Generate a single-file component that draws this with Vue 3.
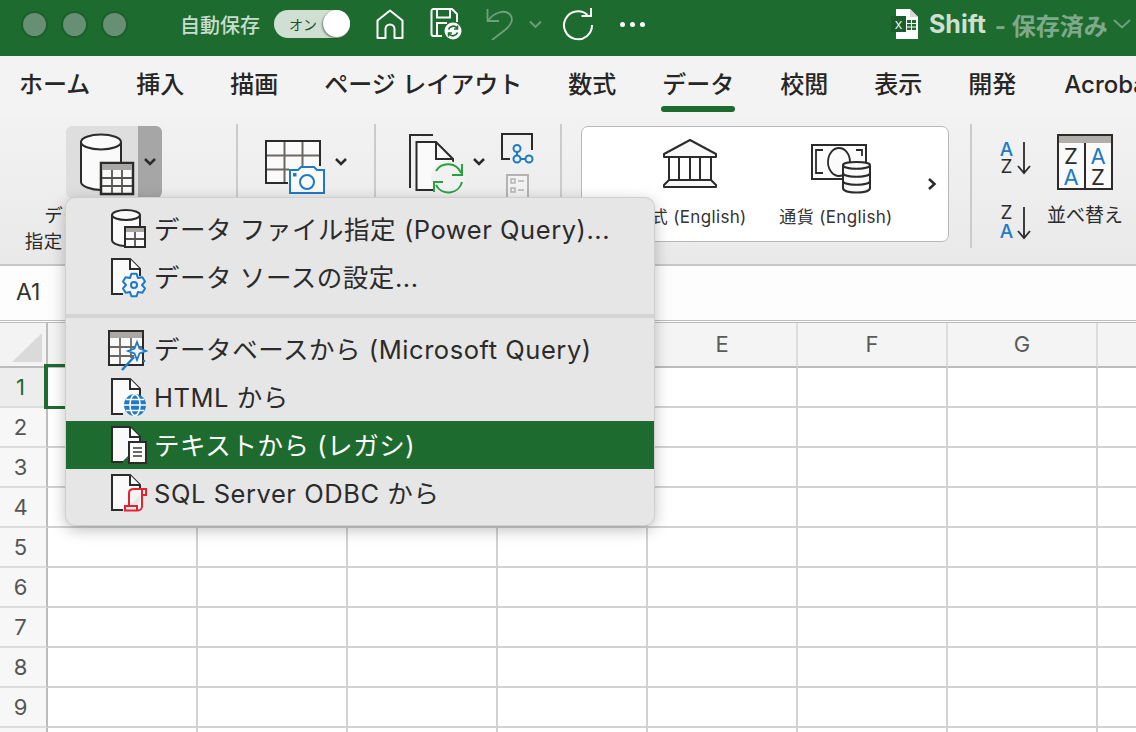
<script setup>
const tabs = [
  { t: 'ホーム' }, { t: '挿入' }, { t: '描画' },
  { t: 'ページ レイアウト' }, { t: '数式' },
  { t: 'データ', active: true }, { t: '校閲' }, { t: '表示' },
  { t: '開発' }, { t: 'Acrobat' }
]
const cols = ['A', 'B', 'C', 'D', 'E', 'F', 'G', 'H']
const rows = [1, 2, 3, 4, 5, 6, 7, 8, 9, 10]
function gear(cx, cy, R, r) {
  const p = []
  for (let i = 0; i < 6; i++) {
    const a = (i * 60 - 90) * Math.PI / 180
    const d = 13 * Math.PI / 180
    const m = 30 * Math.PI / 180
    p.push([cx + R * Math.cos(a - d), cy + R * Math.sin(a - d)])
    p.push([cx + R * Math.cos(a + d), cy + R * Math.sin(a + d)])
    p.push([cx + r * Math.cos(a + m), cy + r * Math.sin(a + m)])
  }
  return p.map(q => q[0].toFixed(1) + ',' + q[1].toFixed(1)).join(' ')
}
const gearPts = gear(26, 32, 11.5, 8)
const docPath = 'M15 36H4V1H22L32 11V18'
</script>

<template>
  <div class="app">
    <header class="titlebar">
      <div class="lights"><i></i><i></i><i></i></div>
      <span class="autosave">自動保存</span>
      <div class="toggle"><span>オン</span><b></b></div>
      <svg class="ic-home" width="28" height="30" viewBox="0 0 28 30"><path d="M1.500 29V11.500L14 1.500L26.500 11.500V29H18.500V20a4.500 4.500 0 0 0-9 0V29Z" fill="none" stroke="#fff" stroke-width="2" stroke-linejoin="round"/></svg>
      <svg class="ic-save" width="32" height="32" viewBox="0 0 32 32">
        <path d="M12 28H3.500a2 2 0 0 1-2-2V3a2 2 0 0 1 2-2H22L27 6V14" fill="none" stroke="#fff" stroke-width="2"/>
        <path d="M7 1.500V9.500H20V1.500M7 27V15H17" fill="none" stroke="#fff" stroke-width="2"/>
        <circle cx="23" cy="23" r="8.500" fill="#fff"/>
        <path d="M18.500 21.500a5 5 0 0 1 8.500-1.500M27.500 24.500a5 5 0 0 1-8.500 1.500" fill="none" stroke="#1e6b30" stroke-width="1.800"/>
        <path d="M27.500 17.500V21H24M18.500 28.500V25H22" fill="none" stroke="#1e6b30" stroke-width="1.500"/>
      </svg>
      <svg class="ic-undo" width="28" height="32" viewBox="0 0 28 32"><path d="M1.500 1V13H13M2.500 12C8 5 18 1 23.500 6C28.500 11 25 17 19 22L6 32" fill="none" stroke="#6f9f7c" stroke-width="1.800"/></svg>
      <svg class="ic-chev" width="13" height="9" viewBox="0 0 13 9"><path d="M1 1.500L6.500 7L12 1.500" fill="none" stroke="#6f9f7c" stroke-width="1.800"/></svg>
      <svg class="ic-redo" width="32" height="34" viewBox="0 0 32 34"><path d="M25.500 8A14 14 0 1 0 30 18" fill="none" stroke="#fff" stroke-width="2"/><path d="M29 1V9H19.500" fill="none" stroke="#fff" stroke-width="2"/></svg>
      <div class="dots"><i></i><i></i><i></i></div>
      <svg class="ic-xl" width="28" height="30" viewBox="0 0 28 30">
        <path d="M5 0H19L27 8V30H5Z" fill="#fff"/><path d="M19 0V8H27" fill="#d8d8d8"/>
        <rect x="16" y="11" width="9" height="10" fill="#1e6b30"/>
        <path d="M16 14.500H25M16 18H25M20.500 11V21" stroke="#fff" stroke-width="1"/>
        <rect x="0" y="7" width="15" height="16" fill="#1a5c2a"/>
        <text x="7.500" y="19.500" text-anchor="middle" class="xl-x">X</text>
      </svg>
      <span class="doc-name">Shift</span>
      <span class="doc-state">- 保存済み</span>
      <svg class="ic-chev2" width="18" height="10" viewBox="0 0 18 10"><path d="M1 1L9 8.500L17 1" fill="none" stroke="#6f9f7c" stroke-width="2"/></svg>
    </header>

    <nav class="tabs">
      <div v-for="tab in tabs" :key="tab.t" class="tab" :class="{ on: tab.active }">{{ tab.t }}</div>
    </nav>

    <section class="ribbon">
      <div class="g1">
        <div class="split">
          <div class="split-main">
            <svg width="72" height="72" viewBox="0 0 72 72">
              <path d="M15 16V56C15 60 25 64 35 64H55V16Z" fill="#fafafa"/>
              <path d="M15 16V56C15 60 25 64 35 64M55 16V36" fill="none" stroke="#2b2b2b" stroke-width="2"/>
              <ellipse cx="35" cy="16" rx="20" ry="7.500" fill="#fafafa" stroke="#2b2b2b" stroke-width="2"/>
              <rect x="35" y="37" width="32" height="31" fill="#fafafa" stroke="#2b2b2b" stroke-width="2.500"/>
              <rect x="36" y="38" width="30" height="6" fill="#a9a8a4"/>
              <path d="M46 44V67M56 44V67M36 52H66M36 60H66" stroke="#55544f" stroke-width="1.800"/>
            </svg>
          </div>
          <div class="split-arrow">
            <svg width="14" height="10" viewBox="0 0 14 10"><path d="M2 2L7 7L12 2" fill="none" stroke="#2b2b2b" stroke-width="2.500"/></svg>
          </div>
        </div>
        <div class="g1-label">データ ファイル<br>指定 (Power Query)</div>
      </div>
      <i class="sep"></i>
      <div class="g2">
        <svg width="90" height="72" viewBox="0 0 90 72">
          <path d="M23 57H1V15H55V40" fill="#fafafa" stroke="#2b2b2b" stroke-width="2"/>
          <path d="M19.500 16V56M37.500 16V40M2 29.500H54M2 43.500H24" stroke="#6a6964" stroke-width="2" fill="none"/>
          <path d="M25 67V44H33L36 41H49L52 44H59V67Z" fill="#fafafa" stroke="#1f7ac6" stroke-width="2"/>
          <circle cx="42" cy="56" r="7" fill="none" stroke="#1f7ac6" stroke-width="2"/>
          <rect x="28" y="47" width="3.500" height="3.500" fill="#1f7ac6"/>
          <path d="M71 33L76 38L81 33" fill="none" stroke="#2b2b2b" stroke-width="2.500"/>
        </svg>
      </div>
      <i class="sep"></i>
      <div class="g3">
        <svg width="135" height="72" viewBox="0 0 135 72">
          <path d="M5 62V9H28" fill="none" stroke="#2b2b2b" stroke-width="2"/>
          <path d="M28 64H11.500V16H31L48 33V40" fill="#fafafa" stroke="#2b2b2b" stroke-width="2"/>
          <path d="M31 16V33H48" fill="none" stroke="#2b2b2b" stroke-width="2"/>
          <circle cx="43" cy="52" r="17" fill="#f1f1f1"/>
          <path d="M31 45A14 14 0 0 1 56 47M57 56A14 14 0 0 1 31 59" fill="none" stroke="#2aa040" stroke-width="2"/>
          <path d="M57 38V49H47M29 66V56H38" fill="none" stroke="#2aa040" stroke-width="2"/>
          <path d="M69 33L74 38L79 33" fill="none" stroke="#2b2b2b" stroke-width="2.500"/>
          <path d="M105 33H97V8H127V24" fill="none" stroke="#2b2b2b" stroke-width="2"/>
          <path d="M112 25V33H120" fill="none" stroke="#1f7ac6" stroke-width="2"/>
          <circle cx="112" cy="22.500" r="3.500" fill="#f2f2f2" stroke="#1f7ac6" stroke-width="2"/>
          <circle cx="112" cy="33" r="3.500" fill="#f2f2f2" stroke="#1f7ac6" stroke-width="2"/>
          <circle cx="124" cy="33" r="3.500" fill="#f2f2f2" stroke="#1f7ac6" stroke-width="2"/>
          <rect x="102" y="49" width="21" height="23" fill="#f2f2f2" stroke="#b4b4b4" stroke-width="2"/>
          <path d="M106 53H110V57H106ZM106 62H110V66H106ZM113 55H119M113 64H119" fill="none" stroke="#b4b4b4" stroke-width="1.500"/>
        </svg>
      </div>
      <i class="sep"></i>
      <div class="g4">
        <div class="card">
          <div class="dtype">
            <svg width="56" height="50" viewBox="0 0 56 50">
              <path d="M2 16L28 2L54 16V19H2Z" fill="#f8f8f8" stroke="#2b2b2b" stroke-width="2" stroke-linejoin="round"/>
              <path d="M7 19V42M17 19V42M28 19V42M38 19V42M49 19V42" stroke="#2b2b2b" stroke-width="2"/>
              <path d="M7 42H49L54 47V49H2V47Z" fill="#f8f8f8" stroke="#2b2b2b" stroke-width="2" stroke-linejoin="round"/>
            </svg>
            <span>株式 (English)</span>
          </div>
          <div class="dtype second">
            <svg width="62" height="50" viewBox="0 0 62 50">
              <path d="M40 35H2V1H56V20" fill="#fbfbfb" stroke="#2b2b2b" stroke-width="2"/>
              <path d="M13 6H6V29H13M46 6H52V12" fill="none" stroke="#2b2b2b" stroke-width="1.800"/>
              <ellipse cx="29" cy="18" rx="11" ry="14" fill="none" stroke="#2b2b2b" stroke-width="1.800"/>
              <path d="M33 21C33 17 60 17 60 21V44C60 50 33 50 33 44Z" fill="#fbfbfb" stroke="#2b2b2b" stroke-width="2"/>
              <path d="M33 21C33 26 60 26 60 21M33 29C33 34 60 34 60 29M33 37C33 42 60 42 60 37" fill="none" stroke="#2b2b2b" stroke-width="2"/>
            </svg>
            <span>通貨 (English)</span>
          </div>
          <svg class="card-next" width="10" height="14" viewBox="0 0 10 14"><path d="M2 2L7.500 7L2 12" fill="none" stroke="#2b2b2b" stroke-width="2.500"/></svg>
        </div>
      </div>
      <i class="sep"></i>
      <div class="g5">
        <svg width="36" height="116" viewBox="0 0 36 116">
          <text x="7.500" y="32" text-anchor="middle" class="sort-a">A</text>
          <text x="7.500" y="49" text-anchor="middle" class="sort-z">Z</text>
          <path d="M25 18V48M19 42L25 49L31 42" fill="none" stroke="#2b2b2b" stroke-width="1.800"/>
          <text x="7.500" y="95" text-anchor="middle" class="sort-z">Z</text>
          <text x="7.500" y="114" text-anchor="middle" class="sort-a">A</text>
          <path d="M25 83V113M19 107L25 114L31 107" fill="none" stroke="#2b2b2b" stroke-width="1.800"/>
        </svg>
        <div class="sort-big">
          <svg width="56" height="56" viewBox="0 0 56 56">
            <rect x="1" y="1" width="54" height="54" fill="#fafafa" stroke="#2b2b2b" stroke-width="2"/>
            <rect x="2" y="2" width="52" height="7" fill="#b0afab"/>
            <path d="M28 9V55" stroke="#2b2b2b" stroke-width="2"/>
            <text x="14" y="30" text-anchor="middle" class="sb-z">Z</text>
            <text x="14" y="51" text-anchor="middle" class="sb-a">A</text>
            <text x="41" y="30" text-anchor="middle" class="sb-a">A</text>
            <text x="41" y="51" text-anchor="middle" class="sb-z">Z</text>
          </svg>
          <span>並べ替え</span>
        </div>
      </div>
    </section>

    <div class="formula"><span>A1</span></div>

    <div class="sheet">
      <div class="corner"><svg width="30" height="29" viewBox="0 0 30 29"><path d="M0 29L30 0V29Z" fill="#dadada"/></svg></div>
      <div v-for="c in cols" :key="c" class="chead">{{ c }}</div>
      <template v-for="r in rows" :key="r">
        <div class="rhead" :class="{ sel: r === 1 }">{{ r }}</div>
        <div v-for="c in cols" :key="c + r" class="cell"></div>
      </template>
    </div>
    <div class="selection"></div>

    <div class="menu">
      <div class="item">
        <svg width="40" height="48" viewBox="0 0 40 48">
          <path d="M4 10V35C4 38 10 41 18 41H32V10Z" fill="#fafafa"/>
          <path d="M4 10V35C4 38 10 41 17 41M32 10V21" fill="none" stroke="#2b2b2b" stroke-width="2"/>
          <ellipse cx="18" cy="10" rx="14" ry="5" fill="#fafafa" stroke="#2b2b2b" stroke-width="2"/>
          <rect x="17" y="22" width="20" height="20" fill="#fafafa" stroke="#2b2b2b" stroke-width="2"/>
          <rect x="18" y="23" width="18" height="4" fill="#a9a8a4"/>
          <path d="M27 27V41M18 34H36" stroke="#55544f" stroke-width="1.800"/>
        </svg>
        <span>データ ファイル指定 (Power Query)...</span>
      </div>
      <div class="item">
        <svg width="40" height="48" viewBox="0 0 40 48">
          <g transform="translate(0,5)"><path d="M15 35H4V1H22L32 11V18L15 35Z" fill="#fafafa"/><path :d="docPath" fill="none" stroke="#2b2b2b" stroke-width="2"/><path d="M22 1V11H32" fill="#fafafa" stroke="#2b2b2b" stroke-width="2"/></g>
          <polygon :points="gearPts" fill="#f4f4f4" stroke="#1f7ac6" stroke-width="2" stroke-linejoin="round"/>
          <circle cx="26" cy="32" r="3" fill="none" stroke="#1f7ac6" stroke-width="2"/>
        </svg>
        <span>データ ソースの設定...</span>
      </div>
      <i class="menu-sep"></i>
      <div class="item">
        <svg width="40" height="48" viewBox="0 0 40 48">
          <rect x="1" y="6" width="34" height="34" fill="#fafafa" stroke="#2b2b2b" stroke-width="2"/>
          <rect x="2" y="7" width="32" height="6" fill="#a9a8a4"/>
          <path d="M12 13V39M23 13V33M2 22H34M2 31H26" stroke="#6a6964" stroke-width="1.800"/>
          <path d="M14 45L26 32" stroke="#1f7ac6" stroke-width="2.500"/>
          <path d="M29 17L31.500 23.500L38 26L31.500 28.500L29 35L26.500 28.500L20 26L26.500 23.500Z" fill="#f4f4f4" stroke="#1f7ac6" stroke-width="1.800"/>
          <circle cx="36" cy="36" r="1.300" fill="#1f7ac6"/>
        </svg>
        <span>データベースから (Microsoft Query)</span>
      </div>
      <div class="item">
        <svg width="40" height="48" viewBox="0 0 40 48">
          <g transform="translate(0,5)"><path d="M15 35H4V1H22L32 11V18L15 35Z" fill="#fafafa"/><path :d="docPath" fill="none" stroke="#2b2b2b" stroke-width="2"/><path d="M22 1V11H32" fill="#fafafa" stroke="#2b2b2b" stroke-width="2"/></g>
          <circle cx="27" cy="32" r="11" fill="#1f7ac6"/>
          <path d="M16 32H38M18 26.500H36M18 37.500H36" stroke="#fff" stroke-width="1.500"/>
          <ellipse cx="27" cy="32" rx="5" ry="10.500" fill="none" stroke="#fff" stroke-width="1.500"/>
        </svg>
        <span>HTML から</span>
      </div>
      <div class="item hot">
        <svg width="40" height="48" viewBox="0 0 40 48">
          <g transform="translate(0,5)"><path d="M15 35H4V1H22L32 11V18L15 35Z" fill="#fafafa"/><path :d="docPath" fill="none" stroke="#2b2b2b" stroke-width="2"/><path d="M22 1V11H32" fill="#fafafa" stroke="#2b2b2b" stroke-width="2"/></g>
          <rect x="21" y="21" width="17" height="21" fill="#fafafa" stroke="#2b2b2b" stroke-width="2"/>
          <path d="M25 27H34M25 31H34M25 35H34" stroke="#6a6964" stroke-width="2"/>
        </svg>
        <span>テキストから (レガシ)</span>
      </div>
      <div class="item">
        <svg width="40" height="48" viewBox="0 0 40 48">
          <g transform="translate(0,5)"><path d="M15 35H4V1H22L32 11V18L15 35Z" fill="#fafafa"/><path :d="docPath" fill="none" stroke="#2b2b2b" stroke-width="2"/><path d="M22 1V11H32" fill="#fafafa" stroke="#2b2b2b" stroke-width="2"/></g>
          <path d="M21 37V24C21 21 23 20 26 20H38V26H34V24M34 20V37C34 40 32 41.500 30 41.500H17V37H29V41" fill="#f4f4f4" stroke="#e8212e" stroke-width="2"/>
        </svg>
        <span>SQL Server ODBC から</span>
      </div>
    </div>
  </div>
</template>

<style>
html, body { margin: 0; padding: 0; background: #fff; overflow: hidden; }
</style>

<style scoped>
.app {
  position: relative;
  width: 1136px;
  height: 732px;
  overflow: hidden;
  background: #fff;
  color: #2b2b2b;
  font-family: Inter, "Noto Sans CJK JP", sans-serif;
}
.app svg { display: block; flex: none; }

.titlebar {
  height: 56px;
  box-sizing: border-box;
  padding: 0 0 8px 21px;
  background: #1e6b30;
  display: flex;
  align-items: center;
  white-space: nowrap;
}
.lights { display: flex; gap: 13px; }
.lights i {
  width: 27px; height: 27px; border-radius: 50%;
  box-sizing: border-box;
  background: #678f73;
  border: 2px solid #1a5e2b;
}
.autosave { margin-left: 52px; width: 81px; font-size: 20px; color: #c9ddce; font-weight: 500; }
.toggle {
  margin-left: 13px;
  width: 76px; height: 28px; border-radius: 14px;
  background: #cfe0d3;
  position: relative;
  display: flex; align-items: center;
  font-size: 14px; color: #1f4d2b;
}
.toggle span { margin-left: 15px; }
.toggle b {
  position: absolute; right: 0; top: 0;
  width: 27px; height: 27px; border-radius: 50%;
  background: #fff;
  box-shadow: -1px 1px 2px rgba(0,0,0,.45);
}
.ic-home { margin-left: 26px; }
.ic-save { margin-left: 26px; }
.ic-undo { margin-left: 24px; }
.ic-chev { margin-left: 15px; }
.ic-redo { margin-left: 20px; }
.dots { margin-left: 26px; display: flex; gap: 5px; }
.dots i { width: 5px; height: 5px; border-radius: 50%; background: #fff; }
.ic-xl { margin-left: 246px; }
.doc-name { margin-left: 10px; font-size: 25px; font-weight: 700; color: #cfe0d3; }
.doc-state { margin-left: 9px; font-size: 24px; font-weight: 700; color: #7fa98b; }
.ic-chev2 { margin-left: 5px; }

.tabs {
  height: 62px;
  box-sizing: border-box;
  padding-left: 19px;
  display: flex;
  gap: 46px;
  background: #f3f3f3;
  white-space: nowrap;
}
.tab {
  position: relative;
  flex: none;
  font-size: 24px;
  line-height: 34px;
  margin-top: 12px;
  font-weight: 500;
  color: #262626;
}
.tab:last-child { margin-left: 2px; }
.tab.on::after {
  content: "";
  position: absolute;
  left: -1px; right: -1px; top: 38px;
  height: 6px;
  border-radius: 3px;
  background: #1e6b30;
}

.ribbon {
  height: 148px;
  box-sizing: border-box;
  padding-top: 8px;
  display: flex;
  align-items: flex-start;
  background: linear-gradient(#f2f2f2, #e9e9e9);
  border-bottom: 2px solid #c6c6c6;
}
.sep { flex: none; width: 2px; height: 124px; margin-top: -2px; background: #cbcbcb; }
.g1 { width: 236px; flex: none; }
.split { margin-left: 66px; width: 96px; height: 72px; display: flex; border-radius: 6px; overflow: hidden; }
.split-main { width: 72px; background: #dedede; }
.split-arrow { width: 24px; background: #a6a6a6; display: flex; align-items: center; justify-content: center; padding-bottom: 1px; }
.g1-label { width: 227px; margin-top: 4px; font-size: 18.500px; letter-spacing: .5px; line-height: 26px; text-align: center; white-space: nowrap; }
.g2 { width: 136px; flex: none; padding-left: 27px; box-sizing: border-box; }
.g3 { width: 184px; flex: none; padding-left: 29px; box-sizing: border-box; }
.g4 { width: 408px; flex: none; padding-left: 19px; box-sizing: border-box; }
.card {
  width: 368px; height: 116px;
  box-sizing: border-box;
  background: #fff;
  border: 1.500px solid #b8b8b8;
  border-radius: 7px;
  display: flex;
  align-items: flex-start;
  padding-left: 35px;
  position: relative;
}
.dtype { width: 146px; display: flex; flex-direction: column; align-items: center; font-size: 17px; letter-spacing: .35px; white-space: nowrap; padding-top: 11px; color: #333; }
.dtype span { margin-top: 15px; }
.dtype.second { padding-top: 17px; }
.dtype.second span { margin-top: 9px; }
.dtype.second svg { margin-left: 10px; }
.card-next { margin-left: 18px; margin-top: 50px; }
.g5 { flex: none; display: flex; padding-left: 27px; margin-top: -2px; }
.sort-big { margin-left: 10px; width: 80px; display: flex; flex-direction: column; align-items: center; padding-top: 10px; font-size: 19px; white-space: nowrap; }
.sort-big span { margin-top: 10px; }

.sort-a { font: 500 19px Inter, sans-serif; fill: #1f7ac6; }
.sort-z { font: 400 19px Inter, sans-serif; fill: #2b2b2b; }
.sb-a { font: 400 22px Inter, sans-serif; fill: #1f7ac6; }
.sb-z { font: 400 22px Inter, sans-serif; fill: #2b2b2b; }
.xl-x { font: 400 11px Inter, sans-serif; fill: #fff; }

.formula {
  height: 57px;
  box-sizing: border-box;
  padding: 8px 0 0 16px;
  background: #fdfdfd;
  font-size: 23px;
  line-height: 36px;
  color: #333;
  border-bottom: 3px double #bdbdbd;
}

.sheet {
  display: grid;
  grid-template-columns: 48px repeat(8, 150px);
  grid-template-rows: 45px;
  grid-auto-rows: 40px;
}
.corner {
  background: #f3f3f3;
  border-right: 2px solid #bcbcbc;
  border-bottom: 2px solid #bcbcbc;
  box-sizing: border-box;
  display: flex; align-items: flex-end; justify-content: flex-end;
  padding: 0 4px 4px 0;
}
.chead {
  background: #f4f4f4;
  border-right: 2px solid #dcdcdc;
  border-bottom: 2px solid #bcbcbc;
  box-sizing: border-box;
  font-size: 22px;
  line-height: 42px;
  text-align: center;
  color: #5a5a5a;
}
.rhead {
  background: #f7f7f7;
  border-right: 2px solid #bcbcbc;
  border-bottom: 2px solid #dcdcdc;
  box-sizing: border-box;
  font-size: 22px;
  line-height: 38px;
  padding-right: 5px;
  text-align: center;
  color: #555;
}
.rhead.sel { color: #1e6b30; background: #ededed; }
.cell {
  border-right: 2px solid #d2d2d2;
  border-bottom: 2px solid #d2d2d2;
  box-sizing: border-box;
  background: #fff;
}
.selection {
  position: absolute;
  left: 44px; top: 364px;
  width: 60px; height: 45px;
  box-sizing: border-box;
  border: 4px solid #1e6b30;
  border-top-width: 3px;
  border-bottom-width: 3px;
}

.menu {
  position: absolute;
  left: 66px; top: 198px;
  width: 588px;
  box-sizing: border-box;
  padding: 7px 0 8px;
  background: #e6e6e6;
  border-radius: 9px;
  box-shadow: 0 0 0 1px #cfcfcf, 0 4px 16px rgba(0,0,0,.28);
  overflow: hidden;
}
.item {
  height: 48px;
  display: flex;
  align-items: center;
  padding-left: 42px;
  font-size: 25.500px;
  letter-spacing: .55px;
  white-space: nowrap;
  color: #2b2b2b;
}
.item span { margin-left: 6px; margin-bottom: 3px; }
.item.hot { background: #1e6b30; color: #fff; }
.menu-sep { display: block; height: 4px; margin: 13px 0 7px; background: #d4d4d4; }
</style>
